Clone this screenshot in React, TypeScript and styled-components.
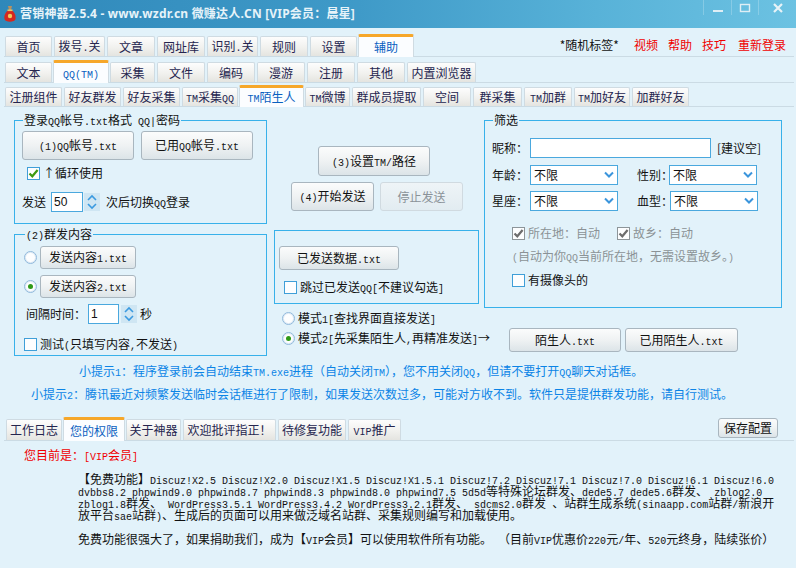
import React from "react";
import styled, { createGlobalStyle } from "styled-components";

const Global = createGlobalStyle`
  html, body { margin: 0; padding: 0; background: #e2f2fa; }
  body { width: 796px; height: 568px; overflow: hidden; font: 12px/14px "Noto Sans CJK SC", "Liberation Sans", sans-serif; color: #111; }
  * { box-sizing: border-box; }
`;

const Window = styled.div`
  width: 796px; height: 568px; display: flex; flex-direction: column; background: #e2f2fa; overflow: hidden;
`;
const TitleBar = styled.header`
  height: 28px; flex: none; display: flex; align-items: center; padding-left: 4px; gap: 4px;
  background: linear-gradient(90deg, #2f88ba 0%, #3f9ac8 45%, #58b2d8 75%, #6cc2e2 100%);
`;
const TitleText = styled.h1`
  margin: 0; font: bold 12px/28px "Noto Sans", "Noto Sans CJK SC", sans-serif; letter-spacing: 0.2px; color: #e6f3f9; white-space: nowrap;
`;
const WinControls = styled.div`
  margin-left: auto; display: flex; align-self: flex-start; height: 15px;
`;
const WinButton = styled.div<{ $w: number }>`
  width: ${(p) => p.$w}px; height: 100%; display: flex; align-items: center; justify-content: center;
  border-left: 1px solid rgba(255,255,255,.22);
`;
const Strip = styled.nav<{ $mt?: number; $h: number; $pl?: number }>`
  flex: none; margin: ${(p) => p.$mt ?? 0}px 2px 0 4px; padding-left: ${(p) => p.$pl ?? 1}px; height: ${(p) => p.$h}px;
  display: flex; align-items: flex-end; gap: 2px; border-bottom: 1px solid #cbdbe4; position: relative;
`;
const Tab = styled.div<{ $w: number; $h: number; $active?: boolean }>`
  flex: none; width: ${(p) => p.$w}px; height: ${(p) => (p.$active ? p.$h + 3 : p.$h)}px;
  display: flex; align-items: center; justify-content: center; white-space: nowrap;
  margin: 0 ${(p) => (p.$active ? -1 : 0)}px ${(p) => (p.$active ? -1 : 0)}px;
  color: ${(p) => (p.$active ? "#0a5fbf" : "#25254f")};
  border: 1px solid #cfdbe2; border-bottom: none; border-radius: 2px 2px 0 0;
  border-top: ${(p) => (p.$active ? "3px solid #f6a72a" : "1px solid #cfdbe2")};
  background: ${(p) => (p.$active ? "#fbfdff" : "linear-gradient(180deg,#fdfdfd 0%,#f1f1ee 55%,#e4e4e0 100%)")};
`;
const Links = styled.div`
  margin-left: auto; margin-bottom: 4px; margin-right: 8px; display: flex; gap: 10px; align-items: center;
`;
const PlainLink = styled.span`
  color: #111; margin-right: 5px;
`;
const RedLink = styled.span<{ $extra?: number }>`
  color: #f00000; margin-left: ${(p) => p.$extra ?? 0}px;
`;
const Panel = styled.main`
  flex: none; height: 245px; padding: 13px 0 0 14px; display: grid; grid-template-columns: 260px 210px 298px; align-items: start;
`;
const Column = styled.section<{ $pr?: number }>`
  display: flex; flex-direction: column; min-width: 0; padding-right: ${(p) => p.$pr ?? 0}px;
`;
const Group = styled.div<{ $h: number; $mt?: number; $p: string; $gap?: number }>`
  position: relative; height: ${(p) => p.$h}px; margin-top: ${(p) => p.$mt ?? 0}px; padding: ${(p) => p.$p};
  border: 1px solid #38b1ea; display: flex; flex-direction: column; gap: ${(p) => p.$gap ?? 0}px;
`;
const Legend = styled.span<{ $left: number }>`
  position: absolute; top: -8px; left: ${(p) => p.$left}px; padding: 0 1px; background: #e2f2fa; white-space: nowrap; line-height: 14px;
`;
const Row = styled.div<{ $gap?: number; $mt?: number; $ml?: number }>`
  display: flex; align-items: center; gap: ${(p) => p.$gap ?? 0}px; margin-top: ${(p) => p.$mt ?? 0}px; margin-left: ${(p) => p.$ml ?? 0}px; white-space: nowrap;
`;
const Btn = styled.button<{ $w: number; $h: number; $disabled?: boolean }>`
  flex: none; width: ${(p) => p.$w}px; height: ${(p) => p.$h}px; padding: 0; font: inherit;
  color: ${(p) => (p.$disabled ? "#8a9298" : "#111")};
  border: 1px solid ${(p) => (p.$disabled ? "#d0dae0" : "#a9b6bf")}; border-radius: 3px;
  background: ${(p) => (p.$disabled ? "linear-gradient(180deg,#eef4f7,#e2ecf1)" : "linear-gradient(180deg,#fbfcfc 0%,#eff2f3 50%,#dce4e8 100%)")};
  display: flex; align-items: center; justify-content: center; white-space: nowrap;
`;
const SmallInput = styled.input<{ $w: number }>`
  width: ${(p) => p.$w}px; height: 20px; padding: 0 2px; border: 1px solid #4aa8de; background: #fff; color: #111;
  font: 12px "Liberation Sans", sans-serif; outline: none;
`;
const WideInput = styled.input`
  width: 181px; height: 20px; border: 1px solid #4aa8de; background: #fff; outline: none; padding: 0 2px;
`;
const SpinBox = styled.span`
  flex: none; width: 16px; height: 18px; background: #cfe6f3; display: block;
`;
const BoxMark = styled.span<{ $gray?: boolean }>`
  flex: none; width: 13px; height: 13px; border: 1px solid ${(p) => (p.$gray ? "#8d9599" : "#3f9fd8")};
  background: #fdfeff; display: flex; align-items: center; justify-content: center;
`;
const RadioMark = styled.span<{ $on?: boolean }>`
  flex: none; width: 13px; height: 13px; border-radius: 50%; border: 1px solid #8fb9dc;
  background: #fdfeff; box-shadow: inset 0 0 0 1px #dfeaf4; display: flex; align-items: center; justify-content: center;
  &::after { content: ""; width: 5px; height: 5px; border-radius: 50%; background: ${(p) => (p.$on ? "#2f9a18" : "transparent")}; }
`;
const SelectBox = styled.div<{ $w?: number }>`
  width: ${(p) => p.$w ?? 88}px; height: 20px; border: 1px solid #4aa8de; background: #fff; padding: 0 3px;
  display: flex; align-items: center; justify-content: space-between;
`;
const Label = styled.span<{ $w?: number; $ml?: number }>`
  flex: none; display: inline-block; width: ${(p) => (p.$w ? `${p.$w}px` : "auto")}; margin-left: ${(p) => p.$ml ?? 0}px;
`;
const GrayText = styled.span<{ $ml?: number }>`
  color: #8b9296; margin-left: ${(p) => p.$ml ?? 0}px; white-space: nowrap;
`;
const Tips = styled.div`
  flex: none; height: 64px; padding-top: 7px; color: #0b84e6; white-space: nowrap;
`;
const Tip = styled.div<{ $indent: number }>`
  height: 23px; line-height: 23px; padding-left: ${(p) => p.$indent}px;
`;
const SaveWrap = styled.div`
  position: absolute; right: 16px; top: 1px;
`;
const Notice = styled.div`
  flex: none; padding: 6px 0 0 24px; color: #f00000; line-height: 14px; height: 22px; margin-top: 1px; white-space: nowrap;
`;
const Body = styled.div`
  flex: none; padding: 9px 0 0 78px; white-space: nowrap; color: #111;
`;
const BodyLine = styled.div<{ $mt?: number }>`
  height: 12px; line-height: 12px; margin-top: ${(p) => p.$mt ?? 0}px;
`;
const Latin = styled.span`
  font: 10px "Liberation Mono", monospace; white-space: pre;
`;

function M({ t }: { t: string }) {
  const parts = t.split(/([\x20-\x7e]+)/).filter(Boolean);
  return (
    <span>
      {parts.map((p, i) => (/^[\x20-\x7e]+$/.test(p) ? <Latin key={i}>{p}</Latin> : <React.Fragment key={i}>{p}</React.Fragment>))}
    </span>
  );
}

const Check = ({ gray }: { gray?: boolean }) => (
  <BoxMark $gray={gray}>
    <svg width="11" height="11" viewBox="0 0 11 11"><path d="M1.5 5.5 L4.3 8.3 L9.6 2" fill="none" stroke={gray ? "#6d6d6d" : "#3e9a12"} strokeWidth="2.2" /></svg>
  </BoxMark>
);
const Spin = () => (
  <SpinBox>
    <svg width="16" height="18" viewBox="0 0 16 18"><path d="M4 7 L8 3 L12 7 M4 11 L8 15 L12 11" fill="none" stroke="#3b9ae0" strokeWidth="1.6" /></svg>
  </SpinBox>
);
const Select = ({ w }: { w?: number }) => (
  <SelectBox $w={w}>
    <span>不限</span>
    <svg width="10" height="8" viewBox="0 0 10 8"><path d="M1 1.5 L5 5.5 L9 1.5" fill="none" stroke="#3b95dc" strokeWidth="2" /></svg>
  </SelectBox>
);
const Logo = () => (
  <svg width="12" height="17" viewBox="0 0 12 17">
    <path d="M4 0 h4 l-1 4 h-2 z" fill="#b98f5e" />
    <path d="M5 4 C1 6 0 10 0.5 13 C1 16.5 11 16.5 11.5 13 C12 10 11 6 7 4 z" fill="#d5281f" />
    <rect x="3.5" y="3.5" width="5" height="1.6" fill="#e8c765" />
    <circle cx="6" cy="10" r="2.2" fill="#f0c95c" />
  </svg>
);

const row1: [string, number][] = [["首页", 47], ["拨号.关", 51], ["文章", 48], ["网址库", 48], ["识别.关", 51], ["规则", 48], ["设置", 47], ["辅助", 56]];
const row2: [string, number][] = [["文本", 47], ["QQ(TM)", 56], ["采集", 45], ["文件", 48], ["编码", 48], ["漫游", 48], ["注册", 48], ["其他", 48], ["内置浏览器", 69]];
const row3: [string, number][] = [["注册组件", 57], ["好友群发", 57], ["好友采集", 57], ["TM采集QQ", 56], ["TM陌生人", 65], ["TM微博", 45], ["群成员提取", 69], ["空间", 48], ["群采集", 49], ["TM加群", 48], ["TM加好友", 56], ["加群好友", 57]];
const row4: [string, number][] = [["工作日志", 56], ["您的权限", 62], ["关于神器", 55], ["欢迎批评指正！", 93], ["待修复功能", 68], ["VIP推广", 53]];

function Tabs({ items, active, h }: { items: [string, number][]; active: string; h: number }) {
  return (
    <>
      {items.map(([t, w]) => (
        <Tab key={t} $w={w} $h={h} $active={t === active}><M t={t} /></Tab>
      ))}
    </>
  );
}

export default function App() {
  return (
    <Window>
      <Global />
      <TitleBar>
        <Logo />
        <TitleText>营销神器2.5.4 - www.wzdr.cn 微赚达人.CN [VIP会员：晨星]</TitleText>
        <WinControls>
          <WinButton $w={28}><svg width="12" height="12" viewBox="0 0 12 12"><rect x="1" y="8" width="10" height="2" fill="#dfeef5" /></svg></WinButton>
          <WinButton $w={27}><svg width="12" height="12" viewBox="0 0 12 12"><rect x="1.5" y="2.5" width="9" height="7" fill="none" stroke="#dfeef5" strokeWidth="1.4" /></svg></WinButton>
          <WinButton $w={38}><svg width="12" height="12" viewBox="0 0 12 12"><path d="M2 2 L10 10 M10 2 L2 10" stroke="#e8f3f8" strokeWidth="2.2" /></svg></WinButton>
        </WinControls>
      </TitleBar>

      <Strip $mt={6} $h={23}>
        <Tabs items={row1} active="辅助" h={20} />
        <Links>
          <PlainLink>*随机标签*</PlainLink>
          <RedLink>视频</RedLink>
          <RedLink>帮助</RedLink>
          <RedLink>技巧</RedLink>
          <RedLink $extra={2}>重新登录</RedLink>
        </Links>
      </Strip>
      <Strip $mt={3} $h={23}><Tabs items={row2} active="QQ(TM)" h={20} /></Strip>
      <Strip $mt={1} $h={23}><Tabs items={row3} active="TM陌生人" h={19} /></Strip>

      <Panel>
        <Column $pr={7}>
          <Group $h={104} $p="10px 0 0 7px">
            <Legend $left={8}><M t="登录QQ帐号.txt格式 QQ|密码" /></Legend>
            <Row $gap={7}>
              <Btn $w={112} $h={29}><M t="(1)QQ帐号.txt" /></Btn>
              <Btn $w={112} $h={29}><M t="已用QQ帐号.txt" /></Btn>
            </Row>
            <Row $mt={6} $ml={5} $gap={3}><Check /><span>↑循环使用</span></Row>
            <Row $mt={12}>
              <Label $w={29}>发送</Label>
              <SmallInput $w={32} defaultValue="50" readOnly />
              <Label $ml={1}><Spin /></Label>
              <Label $ml={6}><M t="次后切换QQ登录" /></Label>
            </Row>
          </Group>
          <Group $h={122} $mt={10} $p="11px 0 0 9px">
            <Legend $left={10}><M t="(2)群发内容" /></Legend>
            <Row $gap={3}><RadioMark /><Btn $w={96} $h={23}><M t="发送内容1.txt" /></Btn></Row>
            <Row $gap={3} $mt={6}><RadioMark $on /><Btn $w={96} $h={23}><M t="发送内容2.txt" /></Btn></Row>
            <Row $mt={6} $ml={2}>
              <Label $w={62}>间隔时间：</Label>
              <SmallInput $w={31} defaultValue="1" readOnly />
              <Label $ml={2}><Spin /></Label>
              <Label $ml={3}>秒</Label>
            </Row>
            <Row $mt={13} $gap={3}><BoxMark /><M t="测试(只填写内容,不发送)" /></Row>
          </Group>
        </Column>

        <Column $pr={5}>
          <Row $mt={26} $ml={44}><Btn $w={112} $h={30}><M t="(3)设置TM/路径" /></Btn></Row>
          <Row $mt={6} $ml={17} $gap={6}>
            <Btn $w={83} $h={29}><M t="(4)开始发送" /></Btn>
            <Btn $w={83} $h={29} $disabled>停止发送</Btn>
          </Row>
          <Group $h={74} $mt={19} $p="15px 0 0 4px">
            <Btn $w={120} $h={24}><M t="已发送数据.txt" /></Btn>
            <Row $mt={10} $ml={5} $gap={3}><BoxMark /><M t="跳过已发送QQ[不建议勾选]" /></Row>
          </Group>
          <Row $mt={7} $ml={8} $gap={3}><RadioMark /><M t="模式1[查找界面直接发送]" /></Row>
          <Row $mt={5} $ml={8} $gap={3}><RadioMark $on /><M t="模式2[先采集陌生人,再精准发送]→" /></Row>
        </Column>

        <Column>
          <Group $h={188} $p="17px 0 0 7px">
            <Legend $left={8}>筛选</Legend>
            <Row>
              <Label $w={38}>昵称：</Label>
              <WideInput readOnly />
              <Label $ml={6}>[建议空]</Label>
            </Row>
            <Row $mt={7}>
              <Label $w={38}>年龄：</Label>
              <Select />
              <Label $ml={19} $w={32}>性别：</Label>
              <Select />
            </Row>
            <Row $mt={6}>
              <Label $w={38}>星座：</Label>
              <Select />
              <Label $ml={19} $w={33}>血型：</Label>
              <Select />
            </Row>
            <Row $mt={15} $ml={20} $gap={3}>
              <Check gray />
              <GrayText>所在地：自动</GrayText>
              <Label $ml={14}><Check gray /></Label>
              <GrayText>故乡：自动</GrayText>
            </Row>
            <Row $mt={9} $ml={20}><GrayText><M t="(自动为你QQ当前所在地，无需设置故乡。)" /></GrayText></Row>
            <Row $mt={9} $ml={20} $gap={3}><BoxMark />有摄像头的</Row>
          </Group>
          <Row $mt={20} $ml={25} $gap={4}>
            <Btn $w={112} $h={24}><M t="陌生人.txt" /></Btn>
            <Btn $w={113} $h={24}><M t="已用陌生人.txt" /></Btn>
          </Row>
        </Column>
      </Panel>

      <Tips>
        <Tip $indent={79}><M t="小提示1：程序登录前会自动结束TM.exe进程（自动关闭TM），您不用关闭QQ，但请不要打开QQ聊天对话框。" /></Tip>
        <Tip $indent={31}><M t="小提示2：腾讯最近对频繁发送临时会话框进行了限制，如果发送次数过多，可能对方收不到。软件只是提供群发功能，请自行测试。" /></Tip>
      </Tips>

      <Strip $mt={1} $h={24} $pl={2}>
        <Tabs items={row4} active="您的权限" h={21} />
        <SaveWrap><Btn $w={60} $h={20}>保存配置</Btn></SaveWrap>
      </Strip>
      <Notice><M t="您目前是：[VIP会员]" /></Notice>
      <Body>
        <BodyLine><M t="【免费功能】Discuz!X2.5 Discuz!X2.0 Discuz!X1.5 Discuz!X1.5.1 Discuz!7.2 Discuz!7.1 Discuz!7.0 Discuz!6.1 Discuz!6.0" /></BodyLine>
        <BodyLine><M t="dvbbs8.2 phpwind9.0 phpwind8.7 phpwind8.3 phpwind8.0 phpwind7.5 5d5d等特殊论坛群发、dede5.7 dede5.6群发、 zblog2.0" /></BodyLine>
        <BodyLine><M t="zblog1.8群发、 WordPress3.5.1 WordPress3.4.2 WordPress3.2.1群发、 sdcms2.0群发 、站群生成系统(sinaapp.com站群/新浪开" /></BodyLine>
        <BodyLine><M t="放平台sae站群)、生成后的页面可以用来做泛域名站群、采集规则编写和加载使用。" /></BodyLine>
        <BodyLine $mt={12}><M t="免费功能很强大了，如果捐助我们，成为【VIP会员】可以使用软件所有功能。 （目前VIP优惠价220元/年、520元终身，陆续张价）" /></BodyLine>
      </Body>
    </Window>
  );
}
